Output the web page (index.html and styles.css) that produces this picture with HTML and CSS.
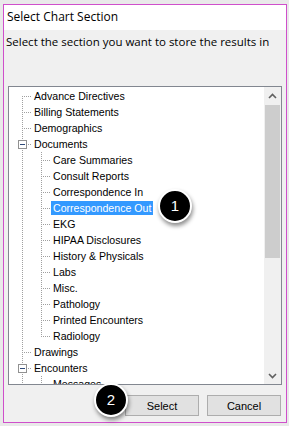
FILE: index.html
```html
<!DOCTYPE html>
<html>
<head>
<meta charset="utf-8">
<link rel="stylesheet" href="styles.css">
</head>
<body>
<div class="dialog">
  <div class="titlebar">Select Chart Section</div>
  <div class="content">
    <div class="prompt">Select the section you want to store the results in</div>
    <div class="tree">
      <div class="tree-list">
        <div class="row l0 first"><span class="label">Advance Directives</span></div>
        <div class="row l0"><span class="label">Billing Statements</span></div>
        <div class="row l0"><span class="label">Demographics</span></div>
        <div class="row l0 open"><span class="toggle"></span><span class="label">Documents</span></div>
        <div class="row l1"><span class="label">Care Summaries</span></div>
        <div class="row l1"><span class="label">Consult Reports</span></div>
        <div class="row l1"><span class="label">Correspondence In</span></div>
        <div class="row l1"><span class="label selected">Correspondence Out</span></div>
        <div class="row l1"><span class="label">EKG</span></div>
        <div class="row l1"><span class="label">HIPAA Disclosures</span></div>
        <div class="row l1"><span class="label">History &amp; Physicals</span></div>
        <div class="row l1"><span class="label">Labs</span></div>
        <div class="row l1"><span class="label">Misc.</span></div>
        <div class="row l1"><span class="label">Pathology</span></div>
        <div class="row l1"><span class="label">Printed Encounters</span></div>
        <div class="row l1 last"><span class="label">Radiology</span></div>
        <div class="row l0"><span class="label">Drawings</span></div>
        <div class="row l0 open"><span class="toggle"></span><span class="label">Encounters</span></div>
        <div class="row l1"><span class="label">Messages</span></div>
      </div>
      <div class="scrollbar">
        <div class="sb-btn"><svg width="9" height="6" viewBox="0 0 9 6"><path d="M1 5 L4.5 1.5 L8 5" fill="none" stroke="#606060" stroke-width="1.6"/></svg></div>
        <div class="sb-track"><div class="sb-thumb"></div></div>
        <div class="sb-btn"><svg width="9" height="6" viewBox="0 0 9 6"><path d="M1 1 L4.5 4.5 L8 1" fill="none" stroke="#606060" stroke-width="1.6"/></svg></div>
      </div>
    </div>
    <div class="buttons">
      <button class="btn">Select</button>
      <button class="btn">Cancel</button>
    </div>
  </div>
  <div class="badge badge-1">1</div>
  <div class="badge badge-2">2</div>
</div>
</body>
</html>
```

FILE: styles.css
```css
html, body {
  margin: 0;
  padding: 0;
}
body {
  background: #e9e9e9;
  padding: 4px 0 0 3px;
  width: 289px;
  height: 426px;
  box-sizing: border-box;
  overflow: hidden;
}
.dialog {
  position: relative;
  width: 284px;
  height: 419px;
  box-sizing: border-box;
  border: 1px solid #cf4fcb;
  display: flex;
  flex-direction: column;
  background: #f0f0f0;
}
.titlebar {
  height: 25px;
  background: #ffffff;
  font-family: "Open Sans", "Noto Sans", sans-serif;
  font-size: 12px;
  line-height: 24px;
  padding-left: 3px;
  color: #000;
}
.content {
  flex: 1;
  display: flex;
  flex-direction: column;
}
.prompt {
  font-family: "Open Sans", "Noto Sans", sans-serif;
  font-size: 11.5px;
  line-height: 15px;
  padding: 4px 0 0 2px;
  color: #000;
  white-space: nowrap;
}
.tree {
  margin: 37px 4px 0 4px;
  height: 299px;
  box-sizing: border-box;
  border: 1px solid #828790;
  background: #ffffff;
  display: flex;
}
.tree-list {
  flex: 1;
  overflow: hidden;
  padding-top: 1px;
  font-family: "Liberation Sans", Arial, sans-serif;
  font-size: 10.6px;
  color: #000;
}
.row {
  height: 16px;
  display: flex;
  align-items: center;
  white-space: nowrap;
  background-repeat: no-repeat;
}
.row .label {
  line-height: 14px;
  height: 14px;
  padding: 0 2px;
}
.l0 .label { margin-left: 23px; }
.l0.open .label { margin-left: 5px; }
.l1 .label { margin-left: 42px; }
.label.selected {
  background: #3399ff;
  color: #ffffff;
}
.toggle {
  margin-left: 9px;
  width: 9px;
  height: 9px;
  box-sizing: border-box;
  border: 1px solid #919191;
  background: #ffffff linear-gradient(#2f4a7a, #2f4a7a) no-repeat 1px 3px / 5px 1px;
}
/* dotted tree lines */
.l0 {
  background-image:
    repeating-linear-gradient(to bottom, #a0a0a0 0 1px, transparent 1px 2px),
    repeating-linear-gradient(to right, #a0a0a0 0 1px, transparent 1px 2px);
  background-size: 1px 16px, 9px 1px;
  background-position: 13px 0, 13px 8px;
}
.l0.first {
  background-size: 1px 8px, 9px 1px;
  background-position: 13px 8px, 13px 8px;
}
.l1 {
  background-image:
    repeating-linear-gradient(to bottom, #a0a0a0 0 1px, transparent 1px 2px),
    repeating-linear-gradient(to bottom, #a0a0a0 0 1px, transparent 1px 2px),
    repeating-linear-gradient(to right, #a0a0a0 0 1px, transparent 1px 2px);
  background-size: 1px 16px, 1px 16px, 9px 1px;
  background-position: 13px 0, 32px 0, 32px 8px;
}
.l1.last {
  background-size: 1px 16px, 1px 9px, 9px 1px;
}
.scrollbar {
  width: 17px;
  background: #f0f0f0;
  display: flex;
  flex-direction: column;
}
.sb-btn {
  height: 17px;
  display: flex;
  align-items: center;
  justify-content: center;
}
.sb-track {
  flex: 1;
  padding: 1px 1px 0 1px;
}
.sb-thumb {
  height: 153px;
  background: #cdcdcd;
}
.buttons {
  display: flex;
  justify-content: flex-end;
  gap: 8px;
  margin: 10px 5px 0 0;
}
.btn {
  width: 74px;
  height: 21px;
  box-sizing: border-box;
  border: 1px solid #adadad;
  background: #e1e1e1;
  font-family: "Liberation Sans", Arial, sans-serif;
  font-size: 11px;
  color: #000;
  padding: 0;
}
.badge {
  position: absolute;
  width: 30px;
  height: 30px;
  border-radius: 50%;
  background: #000;
  border: 2px solid #ffffff;
  box-shadow: 1px 3px 4px rgba(0, 0, 0, 0.45);
  color: #ffffff;
  font-family: "Liberation Sans", Arial, sans-serif;
  font-size: 15px;
  line-height: 30px;
  text-align: center;
}
.badge-1 {
  left: 154px;
  top: 184px;
}
.badge-2 {
  left: 90px;
  top: 378px;
}
```
